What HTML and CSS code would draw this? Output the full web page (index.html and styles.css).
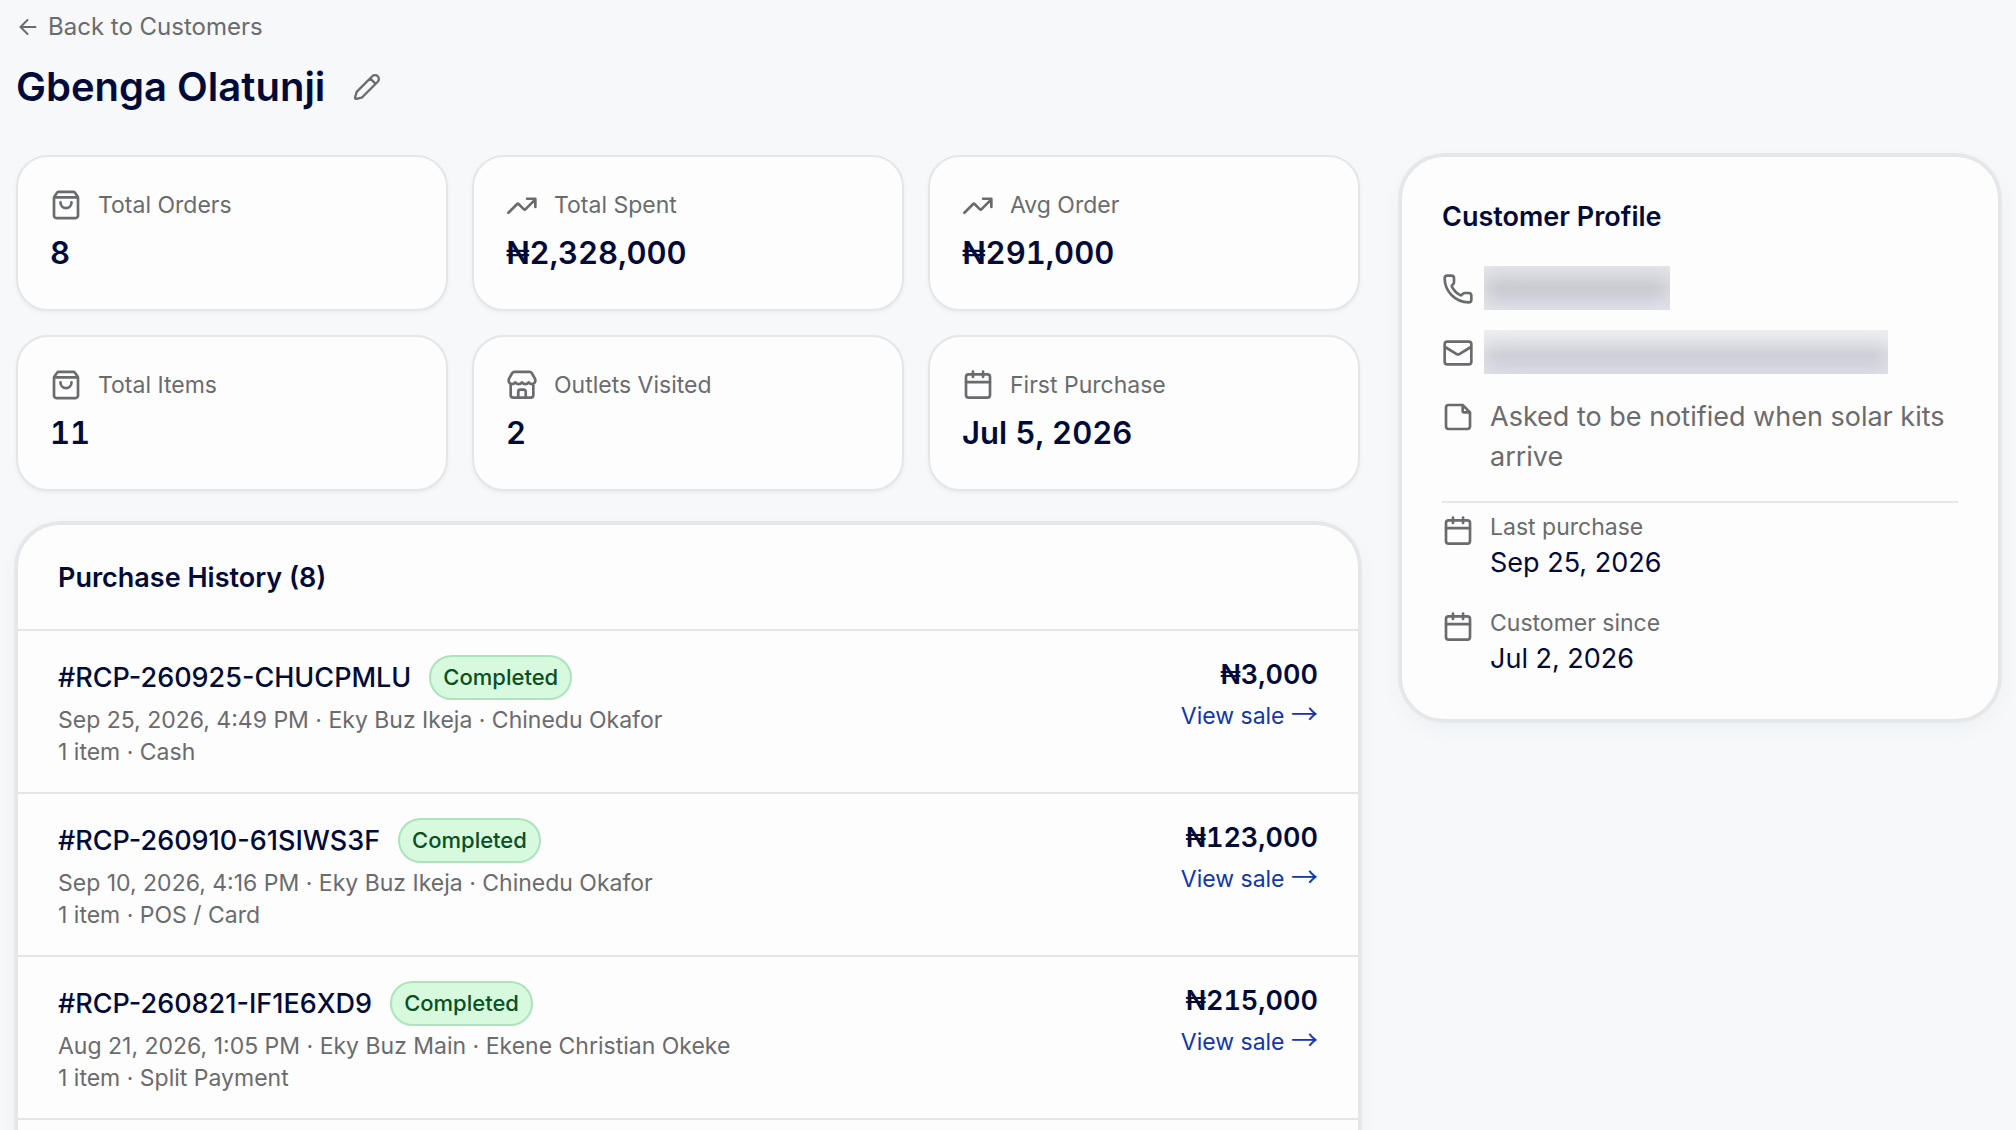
FILE: index.html
```html
<!DOCTYPE html>
<html lang="en">
<head>
<meta charset="utf-8">
<meta name="viewport" content="width=device-width, initial-scale=1">
<title>Gbenga Olatunji</title>
<link rel="stylesheet" href="styles.css">
</head>
<body>
<svg class="sprite" aria-hidden="true">
  <symbol id="i-bag" viewBox="0 0 24 24"><path d="M6.500 2.200h11a1.500 1.500 0 0 1 1.200.6l1.900 2.600a2 2 0 0 1 .4 1.200v13.400a1.800 1.800 0 0 1-1.800 1.800H4.800A1.800 1.800 0 0 1 3 20V6.600a2 2 0 0 1 .4-1.200l1.900-2.600a1.500 1.500 0 0 1 1.200-.6z M3.200 6.300h17.600 M7.900 10v.4a4.100 3.900 0 0 0 8.200 0V10"/></symbol>
  <symbol id="i-trend" viewBox="0 0 24 24"><path d="M1.800 17.800l6.400-6.400a1 1 0 0 1 1.400 0l3.700 3.700a1 1 0 0 0 1.400 0L22 7.800 M15.800 7.300H22v6.200"/></symbol>
  <symbol id="i-store" viewBox="0 0 24 24"><path d="M3.500 11.500v8a2 2 0 0 0 2 2h13a2 2 0 0 0 2-2v-8 M9.200 21.500v-4.500a1.500 1.500 0 0 1 1.500-1.500h2.600a1.500 1.500 0 0 1 1.500 1.500v4.500 M6.300 2.200h11.400a2 2 0 0 1 1.600.8l2.200 3.800a4 4 0 0 1 .4 2.800c-.5 1.200-1.400 1.700-2.300 1.700-1 0-2-.6-2.600-1.300-.6.700-1.500 1.300-2.500 1.300s-1.900-.6-2.500-1.300c-.6.700-1.500 1.300-2.500 1.300s-1.900-.6-2.500-1.300c-.6.700-1.600 1.300-2.600 1.300-.9 0-1.800-.5-2.300-1.700a4 4 0 0 1 .4-2.800L4.700 3a2 2 0 0 1 1.600-.8z"/></symbol>
  <symbol id="i-calendar" viewBox="0 0 24 24"><rect x="3" y="4" width="18" height="17.500" rx="2"/><path d="M3 9.800h18 M8.200 2v4 M15.800 2v4"/></symbol>
  <symbol id="i-phone" viewBox="0 0 24 24"><path d="M13.800 16.600a1 1 0 0 0 1.200-.3l.400-.5A2 2 0 0 1 17 15h3a2 2 0 0 1 2 2v3a2 2 0 0 1-2 2A18 18 0 0 1 2 4a2 2 0 0 1 2-2h3a2 2 0 0 1 2 2v3a2 2 0 0 1-.8 1.600l-.5.400a1 1 0 0 0-.3 1.200 14 14 0 0 0 6.400 6.400"/></symbol>
  <symbol id="i-mail" viewBox="0 0 24 24"><rect x="2" y="3.500" width="20" height="17" rx="2"/><path d="M2.300 7.500l8.700 5.300a2 2 0 0 0 2 0l8.700-5.300"/></symbol>
  <symbol id="i-note" viewBox="0 0 24 24"><path d="M15.500 3H5a2 2 0 0 0-2 2v14a2 2 0 0 0 2 2h14a2 2 0 0 0 2-2V8.500z M15.500 3v4.500a1 1 0 0 0 1 1H21"/></symbol>
  <symbol id="i-pencil" viewBox="0 0 24 24"><path d="M21.200 2.800a3.300 3.300 0 0 0-4.700 0L3.600 15.700a3 3 0 0 0-.7 1.200L1.800 21a1 1 0 0 0 1.200 1.200l4.100-1.100a3 3 0 0 0 1.200-.7L21.200 7.500a3.300 3.300 0 0 0 0-4.700z M14.700 4.600l4.700 4.700"/></symbol>
  <symbol id="i-back" viewBox="0 0 24 24"><path d="M11.500 19l-7-7 7-7 M19.500 12h-15"/></symbol>
</svg>

<div class="page">
  <header class="page-head">
    <a class="back" href="#customers"><svg class="icon icon-sm"><use href="#i-back"/></svg>Back to Customers</a>
    <div class="title-row">
      <h1>Gbenga Olatunji</h1>
      <button class="edit" type="button" aria-label="Edit customer"><svg class="icon icon-md"><use href="#i-pencil"/></svg></button>
    </div>
  </header>

  <div class="columns">
    <main class="main">
      <section class="stats" aria-label="Summary">
        <div class="stat"><div class="stat-label"><svg class="icon"><use href="#i-bag"/></svg>Total Orders</div><div class="stat-value">8</div></div>
        <div class="stat"><div class="stat-label"><svg class="icon"><use href="#i-trend"/></svg>Total Spent</div><div class="stat-value">₦2,328,000</div></div>
        <div class="stat"><div class="stat-label"><svg class="icon"><use href="#i-trend"/></svg>Avg Order</div><div class="stat-value">₦291,000</div></div>
        <div class="stat"><div class="stat-label"><svg class="icon"><use href="#i-bag"/></svg>Total Items</div><div class="stat-value">11</div></div>
        <div class="stat"><div class="stat-label"><svg class="icon"><use href="#i-store"/></svg>Outlets Visited</div><div class="stat-value">2</div></div>
        <div class="stat"><div class="stat-label"><svg class="icon"><use href="#i-calendar"/></svg>First Purchase</div><div class="stat-value">Jul 5, 2026</div></div>
      </section>

      <section class="panel history">
        <h2 class="history-title">Purchase History (8)</h2>
        <ul class="sales">
          <li class="sale">
            <div class="sale-info">
              <div class="sale-head"><span class="sale-id">#RCP-260925-CHUCPMLU</span><span class="badge">Completed</span></div>
              <p class="meta">Sep 25, 2026, 4:49 PM · Eky Buz Ikeja · Chinedu Okafor</p>
              <p class="meta">1 item · Cash</p>
            </div>
            <div class="sale-side"><div class="amount">₦3,000</div><a class="view" href="#sale-1">View sale <span class="arrow">→</span></a></div>
          </li>
          <li class="sale">
            <div class="sale-info">
              <div class="sale-head"><span class="sale-id">#RCP-260910-61SIWS3F</span><span class="badge">Completed</span></div>
              <p class="meta">Sep 10, 2026, 4:16 PM · Eky Buz Ikeja · Chinedu Okafor</p>
              <p class="meta">1 item · POS / Card</p>
            </div>
            <div class="sale-side"><div class="amount">₦123,000</div><a class="view" href="#sale-2">View sale <span class="arrow">→</span></a></div>
          </li>
          <li class="sale">
            <div class="sale-info">
              <div class="sale-head"><span class="sale-id">#RCP-260821-IF1E6XD9</span><span class="badge">Completed</span></div>
              <p class="meta">Aug 21, 2026, 1:05 PM · Eky Buz Main · Ekene Christian Okeke</p>
              <p class="meta">1 item · Split Payment</p>
            </div>
            <div class="sale-side"><div class="amount">₦215,000</div><a class="view" href="#sale-3">View sale <span class="arrow">→</span></a></div>
          </li>
        </ul>
      </section>
    </main>

    <aside class="panel profile">
      <h2>Customer Profile</h2>
      <div class="contact">
        <div class="row"><svg class="icon"><use href="#i-phone"/></svg><span class="redacted redacted-phone" role="img" aria-label="Phone number hidden"></span></div>
        <div class="row"><svg class="icon"><use href="#i-mail"/></svg><span class="redacted redacted-mail" role="img" aria-label="Email hidden"></span></div>
        <div class="row"><svg class="icon"><use href="#i-note"/></svg><p class="note">Asked to be notified when solar kits arrive</p></div>
      </div>
      <dl class="dates">
        <div class="row"><svg class="icon"><use href="#i-calendar"/></svg><div><dt>Last purchase</dt><dd>Sep 25, 2026</dd></div></div>
        <div class="row"><svg class="icon"><use href="#i-calendar"/></svg><div><dt>Customer since</dt><dd>Jul 2, 2026</dd></div></div>
      </dl>
    </aside>
  </div>
</div>
</body>
</html>
```
FILE: styles.css
```css
:root {
  --bg: #f6f8fa;
  --card: #fdfdfd;
  --ink: #020b38;
  --muted: #6a6b6e;
  --line: #e4e6e8;
  --link: #1336ab;
}

* { box-sizing: border-box; }

body {
  margin: 0;
  background: var(--bg);
  color: var(--ink);
  font-family: Inter, "Liberation Sans", sans-serif;
  font-size: 27px;
  line-height: 40px;
}

h1, h2, p, ul, dl, dd { margin: 0; padding: 0; }
ul { list-style: none; }
a { text-decoration: none; }

.sprite { display: none; }

.icon {
  flex: none;
  width: 32px;
  height: 32px;
  fill: none;
  stroke: var(--muted);
  stroke-width: 2;
  stroke-linecap: round;
  stroke-linejoin: round;
}
.icon-sm { width: 24px; height: 24px; }
.icon-md { width: 28px; height: 28px; }

.page { padding: 11px 16px 0; height: 100vh; overflow: hidden; }

.back {
  display: flex;
  width: fit-content;
  align-items: center;
  gap: 8px;
  color: var(--muted);
  font-size: 24px;
  line-height: 32px;
}

.title-row { display: flex; align-items: center; gap: 14px; margin-top: 16px; }
h1 { font-size: 40px; line-height: 56px; font-weight: 600; }
.edit {
  display: grid;
  place-items: center;
  width: 56px;
  height: 56px;
  padding: 0;
  border: 0;
  background: none;
}

.columns {
  display: grid;
  grid-template-columns: minmax(0, 1fr) 600px;
  gap: 40px;
  align-items: start;
  margin-top: 40px;
}
.main { display: grid; gap: 32px; }

.stats { display: grid; grid-template-columns: repeat(3, minmax(0, 1fr)); gap: 24px; }
.stat {
  padding: 32px;
  border: 2px solid var(--line);
  border-radius: 32px;
  background: var(--card);
  box-shadow: 0 2px 4px rgb(0 0 0 / 5%);
}
.stat-label {
  display: flex;
  align-items: center;
  gap: 16px;
  color: var(--muted);
  font-size: 23px;
  line-height: 32px;
}
.stat-value {
  margin-top: 8px;
  font-size: 31px;
  line-height: 48px;
  font-weight: 600;
  font-variant-numeric: tabular-nums;
}

.panel {
  border: 2px solid var(--line);
  border-radius: 44px;
  background: var(--card);
  box-shadow: 0 0 0 2px #e6e9eb, 0 8px 24px rgb(20 50 60 / 4%);
}

h2 { font-size: 27px; line-height: 40px; font-weight: 600; }
.history-title { padding: 33px 40px 31px; }
.sale {
  display: flex;
  justify-content: space-between;
  padding: 24px 40px;
  border-top: 2px solid var(--line);
}
.sale:last-child { border-bottom: 2px solid var(--line); margin-bottom: 60px; }
.sale-head { display: flex; align-items: center; gap: 18px; margin-bottom: 4px; }
.sale-id { font-weight: 500; }
.badge {
  padding: 4px 12px;
  border: 2px solid #ade3bd;
  border-radius: 24px;
  background: #d7f9de;
  color: #0b4f1e;
  font-size: 22px;
  line-height: 33px;
  font-weight: 500;
}
.meta { color: var(--muted); font-size: 23px; line-height: 32px; }
.sale-side { text-align: right; }
.amount { font-weight: 600; font-variant-numeric: tabular-nums; }
.view { display: block; margin-top: 4px; color: var(--link); font-size: 23px; line-height: 32px; }
.arrow { font-family: "Noto Sans CJK JP", sans-serif; font-size: 27px; line-height: 1; }

.profile { padding: 40px; }
.contact { display: grid; gap: 24px; margin-top: 32px; padding-bottom: 24px; }
.row { display: flex; align-items: flex-start; gap: 16px; }
.row > .icon { margin-top: 4px; }
.note { color: var(--muted); }
.redacted {
  height: 44px;
  margin: -3px 0 -1px -6px;
  box-shadow: inset 0 0 16px 4px rgb(240 240 243 / 50%);
}
.redacted-phone { width: 186px; background: linear-gradient(#dcdde1, #cbccd2 50%, #d6d7e0); }
.redacted-mail { width: 404px; background: linear-gradient(#eeeff1, #cfd0d7 55%, #d0d1db); }
.dates { display: grid; gap: 24px; padding-top: 8px; border-top: 2px solid var(--line); }
dt { color: var(--muted); font-size: 23px; line-height: 32px; }
```
